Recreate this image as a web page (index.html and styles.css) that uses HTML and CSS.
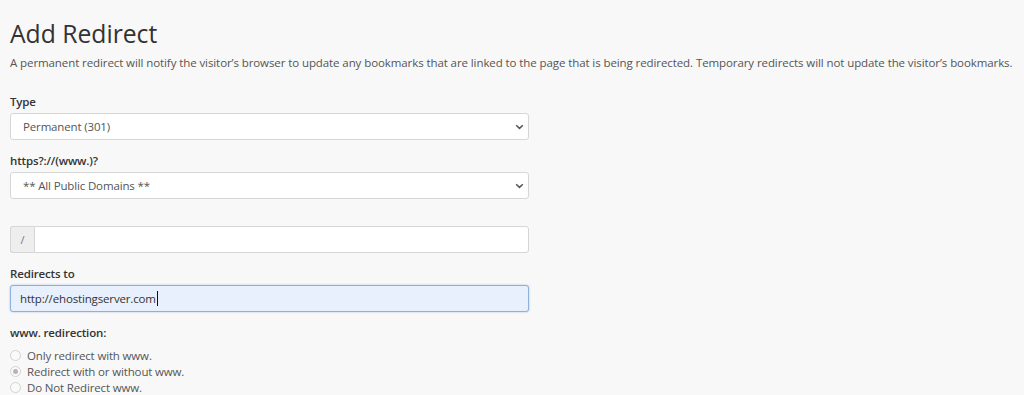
FILE: index.html
```html
<!DOCTYPE html>
<html>
<head>
<meta charset="utf-8">
<link rel="stylesheet" href="styles.css">
</head>
<body>
<div class="page">
  <h1 class="title">Add Redirect</h1>
  <p class="desc">A permanent redirect will notify the visitor’s browser to update any bookmarks that are linked to the page that is being redirected. Temporary redirects will not update the visitor’s bookmarks.</p>

  <div class="group">
    <label class="lbl">Type</label>
    <div class="select-wrap">
      <select class="control select"><option>Permanent (301)</option></select>
      <svg class="chev" width="9" height="6" viewBox="0 0 9 6"><path d="M1.2 1.2 L4.5 4.4 L7.8 1.2" fill="none" stroke="#555" stroke-width="1.5"/></svg>
    </div>
  </div>

  <div class="group">
    <label class="lbl">https?://(www.)?</label>
    <div class="select-wrap">
      <select class="control select"><option>** All Public Domains **</option></select>
      <svg class="chev" width="9" height="6" viewBox="0 0 9 6"><path d="M1.2 1.2 L4.5 4.4 L7.8 1.2" fill="none" stroke="#555" stroke-width="1.5"/></svg>
    </div>
  </div>

  <div class="group group-path">
    <div class="input-group">
      <span class="addon">/</span>
      <input class="control path" type="text">
    </div>
  </div>

  <div class="group">
    <label class="lbl">Redirects to</label>
    <div class="control focused"><span class="val">http://ehostingserver.com</span><span class="caret"></span></div>
  </div>

  <div class="group">
    <label class="lbl">www. redirection:</label>
    <div class="radios">
      <label class="radio"><span class="dot"></span>Only redirect with www.</label>
      <label class="radio"><span class="dot on"></span>Redirect with or without www.</label>
      <label class="radio"><span class="dot"></span>Do Not Redirect www.</label>
    </div>
  </div>
</div>
</body>
</html>
```

FILE: styles.css
```css
html, body {
  margin: 0;
  padding: 0;
  background: #f8f8f8;
}
body {
  font-family: "Open Sans", "DejaVu Sans", sans-serif;
  color: #333;
  font-size: 11.5px;
  letter-spacing: -0.15px;
  line-height: 17px;
}
.page {
  padding: 17px 10px 0 10px;
  width: 1024px;
  box-sizing: border-box;
}
.title {
  margin: 0;
  font-size: 24.7px;
  font-weight: 400;
  letter-spacing: 0;
  line-height: 34px;
  color: #333;
}
.desc {
  margin: 3px 0 22px 0;
  line-height: 17px;
  color: #555;
  letter-spacing: -0.09px;
  white-space: nowrap;
}
.group {
  margin-bottom: 12px;
  width: 519px;
}
.lbl {
  display: block;
  font-weight: 600;
  margin-bottom: 3px;
  line-height: 17px;
  color: #333;
}
.control {
  display: block;
  box-sizing: border-box;
  width: 100%;
  height: 27px;
  border: 1px solid #d6d6d6;
  border-radius: 3px;
  background: #fff;
  font-family: "Open Sans", "DejaVu Sans", sans-serif;
  font-size: 11.5px;
  letter-spacing: -0.15px;
  color: #555;
  margin: 0;
}
.select-wrap {
  position: relative;
}
.select {
  appearance: none;
  -webkit-appearance: none;
  padding: 0 12px;
  outline: none;
}
.chev {
  position: absolute;
  right: 5px;
  top: 11px;
}
.group-path {
  padding-top: 15px;
}
.input-group {
  display: flex;
  height: 27px;
}
.addon {
  box-sizing: border-box;
  width: 24px;
  height: 27px;
  border: 1px solid #d6d6d6;
  border-right: none;
  border-radius: 3px 0 0 3px;
  background: #eee;
  color: #777;
  font-size: 11px;
  display: flex;
  align-items: center;
  justify-content: center;
}
.path {
  flex: 1;
  border-radius: 0 3px 3px 0;
  outline: none;
}
.focused {
  display: flex;
  align-items: center;
  padding: 0 9px;
  background: #e8f0fe;
  border-color: #8fb1d6;
  box-shadow: 0 0 2px rgba(102, 150, 210, 0.6);
  color: #333;
}
.caret {
  display: inline-block;
  width: 1px;
  height: 15px;
  background: #111;
  margin-left: 1px;
}
.radios {
  display: flex;
  flex-direction: column;
  margin-top: 6px;
}
.radio {
  display: flex;
  align-items: center;
  height: 16px;
  color: #555;
}
.dot {
  box-sizing: border-box;
  width: 11px;
  height: 11px;
  border-radius: 50%;
  border: 1px solid #d2d2d2;
  background: #fafafa;
  margin-right: 6px;
  position: relative;
}
.dot.on::after {
  content: "";
  position: absolute;
  left: 2px;
  top: 2px;
  width: 5px;
  height: 5px;
  border-radius: 50%;
  background: #b5b5b5;
}
```
